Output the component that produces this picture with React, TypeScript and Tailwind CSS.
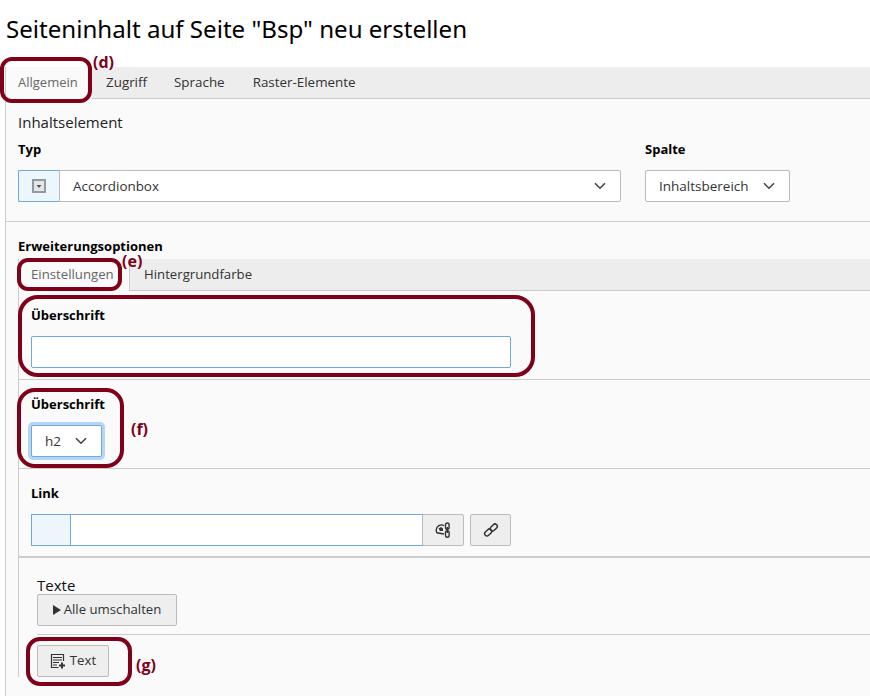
import React from 'react';

const MAROON = 'border-[#7f0019]';

const Chevron: React.FC = () => (
  <svg width="12" height="8" viewBox="0 0 12 8" fill="none" stroke="#444" strokeWidth="1.6">
    <path d="M1 1.2 6 6.2 11 1.2" />
  </svg>
);

const TypeIcon: React.FC = () => (
  <svg width="14" height="14" viewBox="0 0 14 14">
    <rect x="0" y="0" width="14" height="14" fill="#8f9aa5" />
    <rect x="2" y="2" width="10" height="10" fill="#e6e6e6" />
    <path d="M4.5 6h5L7 9z" fill="#555" />
  </svg>
);

const LinkIcon: React.FC = () => (
  <svg width="16" height="16" viewBox="0 0 16 16" fill="none" stroke="#333" strokeWidth="1.5">
    <rect x="1.2" y="8.2" width="8" height="4.6" rx="2.3" transform="rotate(-45 5.2 10.5)" />
    <rect x="6.8" y="3.2" width="8" height="4.6" rx="2.3" transform="rotate(-45 10.8 5.5)" />
  </svg>
);

const PageLinkIcon: React.FC = () => (
  <svg width="16" height="16" viewBox="0 0 16 16" fill="none" stroke="#333" strokeWidth="1.4">
    <path d="M9 3.6A5.2 5.2 0 0 0 1.2 8c0 1 .3 2 .8 2.8L9 12" />
    <path d="M3.5 6.5 6 5l2 1.5V9H5z" fill="#333" stroke="none" />
    <rect x="10.5" y="1" width="3.6" height="6.4" rx="1.8" />
    <rect x="10.5" y="8.8" width="3.6" height="6.4" rx="1.8" />
    <path d="M12.3 5v6" />
  </svg>
);

const AddTextIcon: React.FC = () => (
  <svg width="16" height="16" viewBox="0 0 16 16" fill="none" stroke="#333">
    <path d="M8.5 14.5H1.5V1.5h12V8" strokeWidth="1.2" />
    <path d="M3 4.5h9M3 7h9M3 9.5h6M3 12h4" strokeWidth="1" />
    <path d="M12 9.5v6M9 12.5h6" strokeWidth="2" />
  </svg>
);

const Label: React.FC<{ children: React.ReactNode }> = ({ children }) => (
  <div className="h-[18px] text-[13px] leading-[18px] font-bold text-black">{children}</div>
);

const Select: React.FC<{ text: string; className: string }> = ({ text, className }) => (
  <div className={`flex h-8 items-center justify-between border rounded-[2px] bg-white pl-[13px] pr-[14px] text-[13.5px] text-[#333] ${className}`}>
    <span>{text}</span>
    <Chevron />
  </div>
);

const Button: React.FC<{ children: React.ReactNode; className: string }> = ({ children, className }) => (
  <div className={`flex h-8 items-center justify-center border border-[#bbbbbb] rounded-[2px] bg-[#eeeeee] text-[13.2px] text-[#333] ${className}`}>
    {children}
  </div>
);

const Note: React.FC<{ text: string; className: string }> = ({ text, className }) => (
  <span className={`absolute text-[16px] leading-[16px] font-bold text-[#7f0019] ${className}`}>{text}</span>
);

export default function App() {
  return (
    <div className="relative h-[696px] w-[870px] overflow-hidden bg-white font-['Open_Sans',sans-serif]">
      <h1 className="h-[67px] pl-[6px] pt-[10px] text-[24.1px] leading-[38px] text-black font-['Noto_Sans',sans-serif]">
        Seiteninhalt auf Seite "Bsp" neu erstellen
      </h1>

      <div className="ml-[5px] h-[629px] border-l border-[#cccccc] bg-[#fafafa]">
        {/* Main tabs */}
        <div className="flex h-8 border-b border-[#c8c8c8] bg-[#ededed] text-[13.4px] leading-[31px] text-[#333]">
          <div className="w-[86px] bg-[#fafafa] pl-3 text-[13px] text-[#666] -mb-px">Allgemein</div>
          <div className="pl-[14px] pr-[13px]">Zugriff</div>
          <div className="px-[14px]">Sprache</div>
          <div className="px-[14px]">Raster-Elemente</div>
        </div>

        {/* Inhaltselement */}
        <div className="h-[123px] border-b border-[#cccccc] pl-3 pt-[13px]">
          <div className="h-[20px] text-[15px] leading-[20px] text-[#222]">Inhaltselement</div>
          <div className="mt-2 flex gap-6">
            <div className="w-[603px]">
              <Label>Typ</Label>
              <div className="mt-3 flex h-8 rounded-[2px] border border-[#bbbbbb] bg-white">
                <div className="-m-px flex h-8 w-[42px] items-center justify-center rounded-l-[2px] border border-[#6daae0] border-r-[#bbbbbb] bg-[#edf5fd]">
                  <TypeIcon />
                </div>
                <div className="flex flex-1 items-center justify-between px-[14px] text-[13.4px] text-[#333]">
                  <span>Accordionbox</span>
                  <Chevron />
                </div>
              </div>
            </div>
            <div>
              <Label>Spalte</Label>
              <Select text="Inhaltsbereich" className="mt-3 w-[145px] border-[#bbbbbb]" />
            </div>
          </div>
        </div>

        {/* Erweiterungsoptionen */}
        <div className="pl-3 pt-[15px]">
          <Label>Erweiterungsoptionen</Label>
          <div className="mt-1 border-l border-[#cccccc]">
            <div className="flex h-8 border-b border-[#c8c8c8] bg-[#ededed] text-[13.2px] leading-[31px] text-[#333]">
              <div className="w-[110px] bg-[#fafafa] pl-3 text-[#666] -mb-px">Einstellungen</div>
              <div className="border-l border-[#cccccc] pl-[14px]">Hintergrundfarbe</div>
            </div>

            <div className="h-[89px] border-b border-[#cccccc] pl-3 pt-[15px]">
              <Label>Überschrift</Label>
              <div className="mt-3 h-8 w-[480px] rounded-[2px] border border-[#6daae0] bg-white" />
            </div>

            <div className="h-[89px] border-b border-[#cccccc] pl-3 pt-[15px]">
              <Label>Überschrift</Label>
              <Select text="h2" className="mt-3 w-[71px] border-[#6daae0] shadow-[0_0_0_3px_#b5d5f5]" />
            </div>

            <div className="h-[89px] border-b-2 border-[#cccccc] pl-3 pt-[15px]">
              <Label>Link</Label>
              <div className="mt-3 flex">
                <div className="h-8 w-10 border border-[#6daae0] bg-[#edf5fd]" />
                <div className="h-8 w-[353px] -ml-px border border-[#6daae0] bg-white" />
                <Button className="w-[42px] -ml-px"><PageLinkIcon /></Button>
                <Button className="ml-[6px] w-[41px]"><LinkIcon /></Button>
              </div>
            </div>

            <div className="pl-[18px] pt-[18px]">
              <div className="h-[18px] text-[15px] leading-[19px] text-[#111]">Texte</div>
              <Button className="w-[140px] gap-[3px]">
                <svg width="8" height="10" viewBox="0 0 8 10"><path d="M0 0l8 5-8 5z" fill="#333" /></svg>
                Alle umschalten
              </Button>
              <div className="mt-2 border-t border-[#cccccc] pt-[10px]">
                <Button className="w-[72px] gap-1"><AddTextIcon />Text</Button>
              </div>
            </div>
          </div>
        </div>
      </div>

      {/* Annotation marks */}
      <div className={`absolute left-0 top-[57px] h-[46px] w-[92px] rounded-[12px] border-4 ${MAROON}`} />
      <div className={`absolute left-[17px] top-[258px] h-[33px] w-[105px] rounded-[11px] border-4 ${MAROON}`} />
      <div className={`absolute left-[18px] top-[295px] h-[82px] w-[517px] rounded-[20px] border-4 ${MAROON}`} />
      <div className={`absolute left-[17px] top-[388px] h-[80px] w-[107px] rounded-[18px] border-4 ${MAROON}`} />
      <div className={`absolute left-[26px] top-[637px] h-[49px] w-[106px] rounded-[14px] border-4 ${MAROON}`} />
      <Note text="(d)" className="left-[93px] top-[54px]" />
      <Note text="(e)" className="left-[122px] top-[253px]" />
      <Note text="(f)" className="left-[131px] top-[421px]" />
      <Note text="(g)" className="left-[136px] top-[657px]" />
    </div>
  );
}
